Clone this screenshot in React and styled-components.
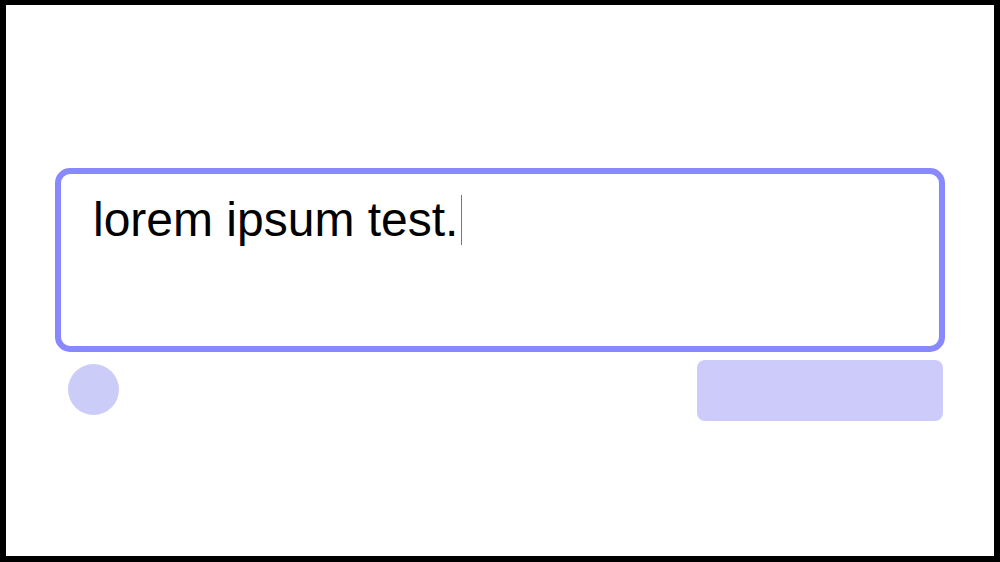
import React from "react";
import styled, { createGlobalStyle } from "styled-components";

const Global = createGlobalStyle`
  html, body { margin: 0; padding: 0; background: #fff; }
  * { box-sizing: border-box; }
`;

const Frame = styled.div`
  width: 1000px;
  height: 562px;
  border: 6px solid #000;
  border-top-width: 5px;
  background: #fff;
  padding: 163px 49px 0 49px;
  font-family: "Liberation Sans", Arial, sans-serif;
`;

const Editor = styled.div`
  height: 184px;
  border: 6px solid #8888ff;
  border-radius: 15px;
  padding: 18px 32px;
  font-size: 48px;
  color: #000;
  line-height: 55px;
  white-space: pre;
`;

const Caret = styled.span`
  display: inline-block;
  width: 1px;
  height: 50px;
  background: #777;
  vertical-align: -9px;
  margin-left: 3px;
`;

const Actions = styled.div`
  display: flex;
  justify-content: space-between;
  align-items: flex-start;
  margin-top: 8px;
`;

const Avatar = styled.div`
  width: 51px;
  height: 51px;
  border-radius: 50%;
  background: #ccccf9;
  margin-top: 4px;
  margin-left: 13px;
`;

const SubmitButton = styled.div`
  width: 246px;
  height: 61px;
  border-radius: 8px;
  background: #cdcbf9;
  margin-right: 2px;
`;

export default function App() {
  return (
    <>
      <Global />
      <Frame>
        <Editor>
          lorem ipsum test.<Caret />
        </Editor>
        <Actions>
          <Avatar />
          <SubmitButton />
        </Actions>
      </Frame>
    </>
  );
}
